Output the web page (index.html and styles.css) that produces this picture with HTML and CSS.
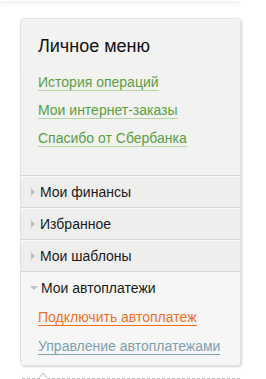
FILE: index.html
```html
<!DOCTYPE html>
<html lang="ru">
<head>
  <meta charset="UTF-8">
  <title>Личное меню</title>
  <link rel="stylesheet" href="styles.css">
</head>
<body>
  <div class="topbar"></div>
  <aside class="menu">
    <div class="menu-head">
      <h2>Личное меню</h2>
      <a class="link-green" href="#">История операций</a>
      <a class="link-green" href="#">Мои интернет-заказы</a>
      <a class="link-green" href="#">Спасибо от Сбербанка</a>
    </div>
    <div class="menu-item"><span class="arrow-right"></span>Мои финансы</div>
    <div class="menu-item"><span class="arrow-right"></span>Избранное</div>
    <div class="menu-item"><span class="arrow-right"></span>Мои шаблоны</div>
    <div class="menu-item open"><span class="arrow-down"></span>Мои автоплатежи</div>
    <div class="submenu">
      <a class="link-orange" href="#">Подключить автоплатеж</a>
      <a class="link-grey" href="#">Управление автоплатежами</a>
    </div>
  </aside>
  <div class="divider"><span class="caret"></span></div>
</body>
</html>
```

FILE: styles.css
```css
/* Reset */
* { margin: 0; padding: 0; box-sizing: border-box; }
body {
  font-family: 'Liberation Sans', Arial, sans-serif;
  background: #ffffff;
  color: #222;
  width: 266px;
  overflow: hidden;
}
.topbar {
  height: 1px;
  width: 240px;
  box-shadow: 0 1px 4px rgba(0,0,0,0.25);
}
.menu {
  width: 221px;
  margin: 17px 0 0 20px;
  background: linear-gradient(#f3f3f2, #efefee);
  border: 1px solid #e2e2e2;
  border-radius: 4px;
  box-shadow: 1px 1px 2px rgba(0,0,0,0.18);
  overflow: hidden;
}
.menu-head {
  padding: 16px 17px 17px;
  display: flex;
  flex-direction: column;
  align-items: flex-start;
}
.menu-head h2 {
  font-weight: normal;
  font-size: 18px;
  line-height: 22px;
  color: #111;
  margin-bottom: 17px;
}
a {
  font-size: 14px;
  line-height: 16px;
  text-decoration: none;
}
.link-green {
  color: #5aa041;
  border-bottom: 1px solid #b4d6a4;
  margin-bottom: 11px;
}
.menu-item {
  height: 32px;
  display: flex;
  align-items: center;
  padding-left: 10px;
  font-size: 14px;
  color: #1a1a1a;
  background: #eeeeed;
  border-top: 1px solid #d6d6d6;
  box-shadow: inset 0 1px 0 #fafafa;
}
.menu-item.open {
  background: #f6f6f6;
  box-shadow: none;
}
.arrow-right {
  width: 0; height: 0;
  border-top: 4px solid transparent;
  border-bottom: 4px solid transparent;
  border-left: 4px solid #c0c0c0;
  margin-right: 5px;
}
.arrow-down {
  width: 0; height: 0;
  border-left: 4px solid transparent;
  border-right: 4px solid transparent;
  border-top: 4px solid #c0c0c0;
  margin-right: 3px;
  margin-left: -1px;
}
.submenu {
  background: #f6f6f6;
  padding: 6px 17px 10px;
  display: flex;
  flex-direction: column;
  align-items: flex-start;
}
.link-orange {
  color: #f0701e;
  border-bottom: 1px solid #f0701e;
  margin-bottom: 12px;
}
.link-grey {
  color: #7fa0ae;
  border-bottom: 1px solid #7fa0ae;
}
.divider {
  position: relative;
  margin: 12px 0 0 22px;
  width: 218px;
  border-top: 1px dashed #bdbdbd;
}
.caret {
  position: absolute;
  left: 18px;
  top: -5px;
  width: 6px; height: 6px;
  border-left: 1px solid #c4c4c4;
  border-top: 1px solid #c4c4c4;
  background: #fff;
  transform: rotate(45deg);
}
```
